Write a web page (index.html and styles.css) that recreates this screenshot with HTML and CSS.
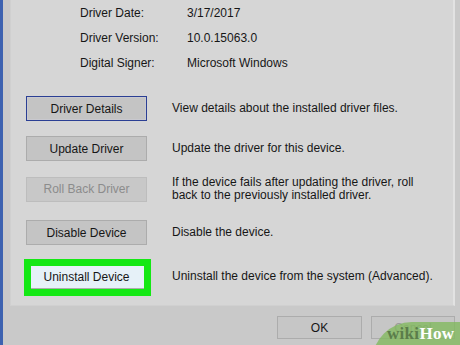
FILE: index.html
```html
<!DOCTYPE html>
<html>
<head>
<meta charset="utf-8">
<link rel="stylesheet" href="styles.css">
</head>
<body>
<div class="frame">
  <div class="panel">
    <div class="info">
      <div class="label">Driver Date:</div><div class="value">3/17/2017</div>
      <div class="label">Driver Version:</div><div class="value">10.0.15063.0</div>
      <div class="label">Digital Signer:</div><div class="value">Microsoft Windows</div>
    </div>
    <div class="actions">
      <div class="action">
        <div class="btn focused">Driver Details</div>
        <div class="desc">View details about the installed driver files.</div>
      </div>
      <div class="action">
        <div class="btn">Update Driver</div>
        <div class="desc">Update the driver for this device.</div>
      </div>
      <div class="action tall">
        <div class="btn disabled">Roll Back Driver</div>
        <div class="desc">If the device fails after updating the driver, roll<br>back to the previously installed driver.</div>
      </div>
      <div class="action">
        <div class="btn">Disable Device</div>
        <div class="desc">Disable the device.</div>
      </div>
      <div class="action last">
        <div class="btn hot highlighted">Uninstall Device</div>
        <div class="desc">Uninstall the device from the system (Advanced).</div>
      </div>
    </div>
  </div>
  <div class="footer">
    <div class="btn ok">OK</div>
    <div class="btn cancel">Cancel</div>
  </div>
</div>
<div class="watermark"><span class="wiki">wiki</span><span class="how">How</span></div>
</body>
</html>
```

FILE: styles.css
```css
html, body {
  margin: 0;
  padding: 0;
}
body {
  width: 460px;
  height: 345px;
  overflow: hidden;
  position: relative;
  background: #c9c9c9;
  font-family: "Liberation Sans", Arial, sans-serif;
  font-size: 12px;
  color: #161616;
}
.frame {
  height: 345px;
  box-sizing: border-box;
  border-left: 3px solid #3d62b0;
  padding-left: 7px;
  display: flex;
  flex-direction: column;
}
.panel {
  width: 445px;
  height: 306px;
  box-sizing: border-box;
  background: #d6d6d6;
  border-left: 1px solid #d0d0d0;
  border-right: 2px solid #e2e2e2;
  border-bottom: 1px solid #d0d0d0;
  padding-left: 15px;
}
.info {
  display: grid;
  grid-template-columns: 107px auto;
  line-height: 25px;
  padding-top: 1px;
  padding-left: 54px;
}
.actions {
  margin-top: 20px;
  display: flex;
  flex-direction: column;
  gap: 15px;
}
.action {
  display: flex;
  align-items: center;
  gap: 25px;
  min-height: 25px;
}
.action.tall {
  margin-bottom: 3px;
}
.action.last {
  margin-top: 4px;
}
.desc {
  line-height: 13px;
  color: #161616;
}
.btn {
  width: 121px;
  height: 25px;
  box-sizing: border-box;
  background: #c4c4c4;
  border: 1px solid #acacac;
  display: flex;
  align-items: center;
  justify-content: center;
  color: #161616;
  flex-shrink: 0;
}
.btn.focused {
  border: 1px solid #2b3f94;
  box-shadow: inset 0 0 0 1px #c9c9cf;
}
.btn.disabled {
  background: #c8c8c8;
  border-color: #bdbdbd;
  color: #8c8c8c;
}
.btn.hot {
  background: #e6f1f8;
}
.highlighted {
  position: relative;
}
.highlighted::after {
  content: "";
  position: absolute;
  left: -3px;
  top: -6px;
  right: -5px;
  bottom: -8px;
  border: 7px solid #14e814;
}
.footer {
  display: flex;
  justify-content: flex-end;
  gap: 9px;
  padding-top: 10px;
  padding-right: 5px;
}
.btn.ok {
  width: 85px;
  height: 23px;
  background: #c6c6c6;
}
.btn.cancel {
  width: 84px;
  height: 23px;
  background: #c6c6c6;
  color: #9a9a9a;
}
.watermark {
  position: absolute;
  left: 372px;
  top: 322px;
  width: 110px;
  height: 40px;
  border-radius: 40px 0 0 0;
  background: rgba(128, 184, 92, 0.78);
  box-sizing: border-box;
  padding-left: 15px;
  padding-top: 2px;
  font-family: "Liberation Serif", "Times New Roman", serif;
  font-weight: bold;
  font-size: 17px;
  letter-spacing: 0.3px;
}
.wiki {
  color: #5b7d4a;
}
.how {
  color: #ffffff;
}
```
